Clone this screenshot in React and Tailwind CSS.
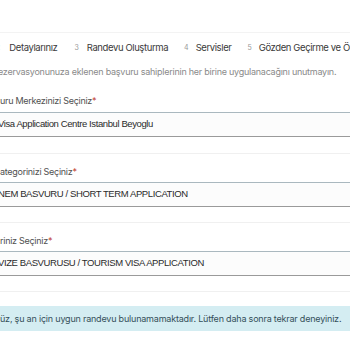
export default function App() {
  const inter = { fontFamily: 'Inter, "Noto Sans", sans-serif' };
  const arial = { fontFamily: '"Liberation Sans", Arial, sans-serif' };
  const groups = [
    { label: 'uru Merkezinizi Seçiniz', value: 'Visa Application Centre Istanbul Beyoglu', first: true },
    { label: 'ategorinizi Seçiniz', value: 'NEM BASVURU / SHORT TERM APPLICATION' },
    { label: 'riniz Seçiniz', value: 'VIZE BASVURUSU / TOURISM VISA APPLICATION' },
  ];
  return (
    <div className="w-[350px] h-[350px] overflow-hidden bg-white" style={inter}>
      <div className="h-[33px] border-b border-[#f3f3f3]" />
      <div className="flex items-center h-[30px] text-[9.5px] tracking-[-0.4px] text-[#3a3a3a] whitespace-nowrap -ml-[4px]">
        <span className="text-[7px] text-[#999] tracking-normal">2</span>
        <span className="ml-[9px]">Detaylarınız</span>
        <span className="ml-[17px] text-[7px] text-[#999] tracking-normal">3</span>
        <span className="ml-[8px]">Randevu Oluşturma</span>
        <span className="ml-[16px] text-[7px] text-[#999] tracking-normal">4</span>
        <span className="ml-[7px]">Servisler</span>
        <span className="ml-[16px] text-[7px] text-[#999] tracking-normal">5</span>
        <span className="ml-[7px]">Gözden Geçirme ve Ödeme</span>
      </div>
      <div className="h-[18px] flex items-center text-[9px] tracking-[-0.25px] text-[#8a8a8a] whitespace-nowrap -ml-[5px]">
        rezervasyonunuza eklenen başvuru sahiplerinin her birine uygulanacağını unutmayın.
      </div>
      <div className="h-[1px]" />
      {groups.map((g, i) => (
        <div
          key={i}
          className={
            'border-b border-[#f0f0f0] flex flex-col ' + (g.first ? 'pb-[16px]' : 'pb-[15px]')
          }
        >
          <div
            className={
              'h-[12px] flex items-center text-[9px] tracking-[-0.28px] text-[#505050] whitespace-nowrap ' +
              (g.first ? 'mt-[13px]' : 'mt-[12px]')
            }
          >
            {g.label}
            <span className="text-[#c0392b]">*</span>
          </div>
          <div
            className={
              'h-[25px] border-t border-t-[#aab8bf] border-b border-b-[#9a9a9a] bg-[#fcfcfc] flex items-center -ml-[2px] text-[9.5px] tracking-[-0.4px] text-[#2a2a2a] whitespace-nowrap ' +
              (g.first ? 'mt-[5px]' : 'mt-[4px]')
            }
            style={arial}
          >
            {g.value}
          </div>
        </div>
      ))}
      <div className="mt-[14px] h-[25px] bg-[#d4edf2] flex items-center text-[9px] tracking-[-0.2px] text-[#34505a] whitespace-nowrap">
        üz, şu an için uygun randevu bulunamamaktadır. Lütfen daha sonra tekrar deneyiniz.
      </div>
    </div>
  );
}
